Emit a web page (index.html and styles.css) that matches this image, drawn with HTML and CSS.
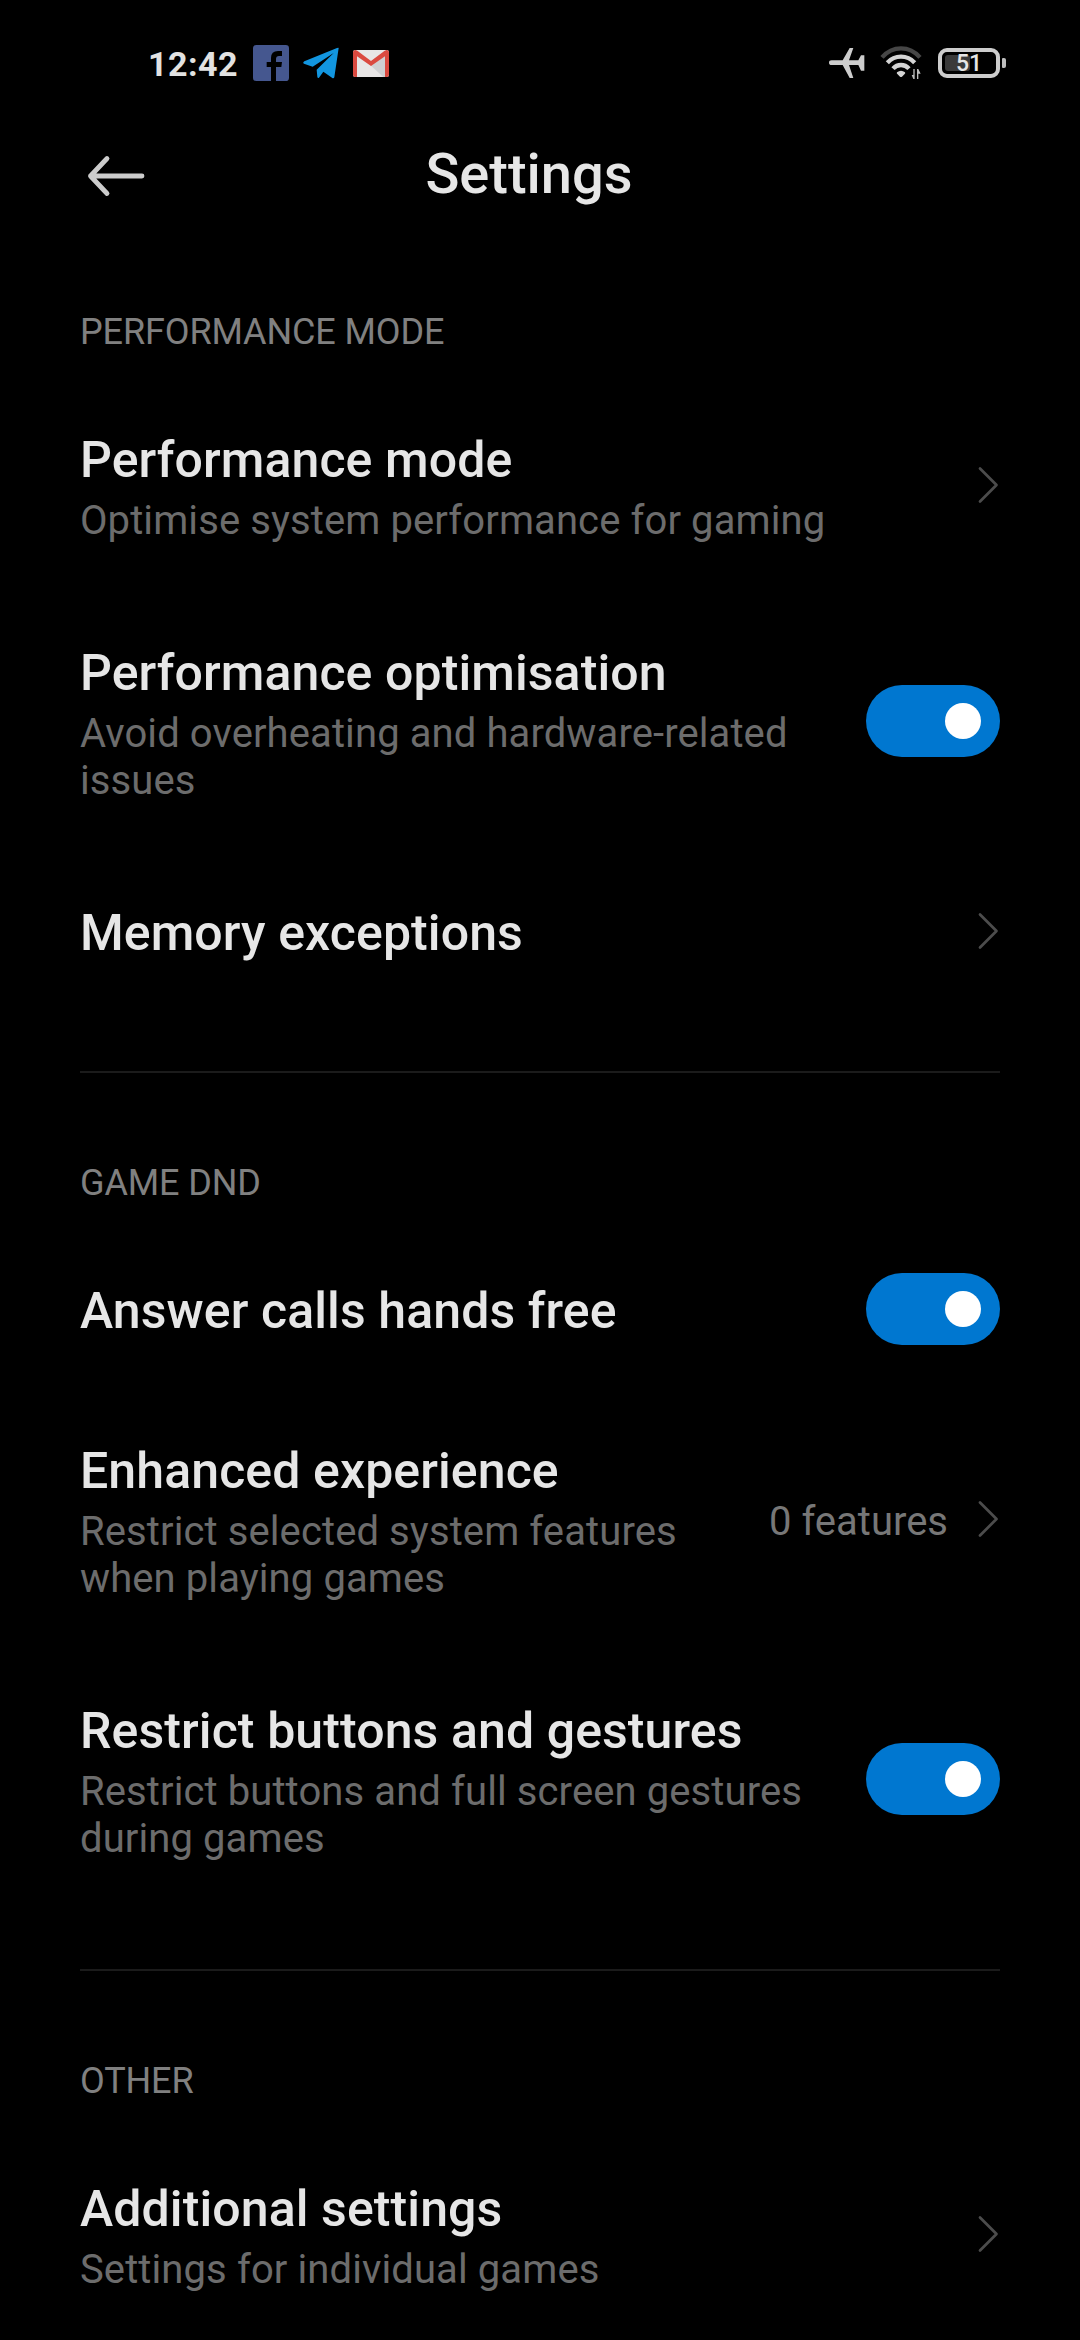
FILE: index.html
```html
<!DOCTYPE html>
<html lang="en">
<head>
<meta charset="utf-8">
<title>Settings</title>
<link rel="stylesheet" href="styles.css">
</head>
<body>
<svg class="defs" width="0" height="0" aria-hidden="true">
  <symbol id="chevron" viewBox="0 0 22 40"><path d="M2 3.500 18.500 20 2 36.500" fill="none" stroke="#4c4c4c" stroke-width="2.700" stroke-linecap="round" stroke-linejoin="round"/></symbol>
</svg>
<div class="status">
  <div class="status-left">
    <span class="clock">12:42</span>
    <svg width="36" height="36" viewBox="0 0 108 108"><path fill="#45578f" d="M10 0H98Q108 0 108 10V98Q108 108 98 108H69V66H85L87 51H69V42Q69 33 78 33H87V18H75Q54 18 54 39V51H41V66H54V108H10Q0 108 0 98V10Q0 0 10 0Z"/></svg>
    <svg width="36" height="36" viewBox="0 0 108 108"><path fill="#1296e0" d="M107 9 94 97Q92 101 88 99L61 80 48 98Q44 101 43 95L41 74 92 24 29 65 3 56Q-2 53 4 49L102 9Q107 7 107 9Z"/></svg>
    <svg width="36" height="27" viewBox="0 0 108 81"><rect width="108" height="81" rx="7" fill="#e8e6e6"/><path fill="#cfd0d2" d="M54 47 97 12V81H91Z"/><path fill="#db4a40" d="M0 8Q0 0 8 0L14 3 54 33 94 3 100 0Q108 0 108 8V74Q108 81 101 81H96V19L54 48 12 19V81H7Q0 81 0 74Z"/></svg>
  </div>
  <div class="status-right">
    <svg width="36" height="30" viewBox="0 0 108 90"><path fill="#cdcdcd" d="M8 37H41L62 0H73L60 37H88L96 22H106V68H96L88 51H60L73 90H62L41 51H8Q0 51 0 44 0 37 8 37Z"/></svg>
    <svg width="43" height="34" viewBox="0 0 129 102"><g fill="none" stroke-width="13"><path stroke="#464646" d="M6 34Q30 7 63 7T120 34"/><path stroke="#d4d4d4" d="M22 50Q39 32 63 32T104 50"/><path stroke="#d4d4d4" d="M39 68Q49 57 63 57T87 68"/></g><path fill="#d4d4d4" d="M51 79Q63 69 75 79 77 82 74 84L66 92Q63 94 60 92L52 84Q49 82 51 79Z"/><path fill="#bcbcbc" d="M104 69V99H100L95 87H100V69ZM111 99V69H115L122 83H115V99Z"/></svg>
    <div class="battery"><div class="battery-level"></div><span class="battery-text">51</span></div>
    <div class="battery-tip"></div>
  </div>
</div>
<header class="header">
  <svg class="back" width="60" height="44" viewBox="0 0 60 44"><path d="M56 22H4.500M21 4.500 4.500 22 21 39.500" fill="none" stroke="#cccccc" stroke-width="4.800" stroke-linecap="round" stroke-linejoin="round"/></svg>
  <h1 class="heading">Settings</h1>
</header>
<main>
  <section class="group">
    <h2 class="caption">PERFORMANCE MODE</h2>
    <div class="row double first">
      <div class="copy"><div class="title">Performance mode</div><div class="summary">Optimise system performance for gaming</div></div>
      <svg class="chevron"><use href="#chevron"/></svg>
    </div>
    <div class="row triple">
      <div class="copy"><div class="title">Performance optimisation</div><div class="summary">Avoid overheating and hardware-related<br>issues</div></div>
      <div class="switch"><div class="knob"></div></div>
    </div>
    <div class="row single">
      <div class="copy"><div class="title">Memory exceptions</div></div>
      <svg class="chevron"><use href="#chevron"/></svg>
    </div>
  </section>
  <section class="group">
    <h2 class="caption">GAME DND</h2>
    <div class="row single">
      <div class="copy"><div class="title">Answer calls hands free</div></div>
      <div class="switch"><div class="knob"></div></div>
    </div>
    <div class="row triple">
      <div class="copy"><div class="title">Enhanced experience</div><div class="summary">Restrict selected system features<br>when playing games</div></div>
      <span class="value">0 features</span>
      <svg class="chevron"><use href="#chevron"/></svg>
    </div>
    <div class="row triple">
      <div class="copy"><div class="title">Restrict buttons and gestures</div><div class="summary">Restrict buttons and full screen gestures<br>during games</div></div>
      <div class="switch"><div class="knob"></div></div>
    </div>
  </section>
  <section class="group">
    <h2 class="caption">OTHER</h2>
    <div class="row double">
      <div class="copy"><div class="title">Additional settings</div><div class="summary">Settings for individual games</div></div>
      <svg class="chevron"><use href="#chevron"/></svg>
    </div>
  </section>
</main>
</body>
</html>
```
FILE: styles.css
```css
* { box-sizing: border-box; }
html { background: #000; }
body {
  margin: 0;
  width: 1080px;
  height: 2340px;
  overflow: hidden;
  background: #000;
  color: #e6e6e6;
  font-family: Roboto, sans-serif;
}
svg { display: block; flex: none; }
.defs { position: absolute; }
h1, h2 { margin: 0; }

.status {
  display: flex;
  justify-content: space-between;
  height: 126px;
  padding: 0 74px 0 148px;
}
.status-left, .status-right {
  display: flex;
  align-items: center;
  height: 126px;
}
.status-left { gap: 14px; }
.status-right { gap: 15px; }
.clock {
  width: 91px;
  padding-top: 1px;
  font-size: 34px;
  font-weight: 700;
  line-height: 40px;
  letter-spacing: 0.5px;
  color: #e2e2e2;
}
.battery {
  display: flex;
  align-items: center;
  justify-content: center;
  position: relative;
  width: 62px;
  height: 30px;
  border: 4px solid #cdcdcd;
  border-radius: 9px;
}
.battery-level {
  position: absolute;
  left: 3px;
  top: 3px;
  width: 25px;
  height: 16px;
  border-radius: 3px;
  background: #3a3a3a;
}
.battery-text {
  position: relative;
  padding-top: 2px;
  font-size: 23px;
  font-weight: 500;
  line-height: 24px;
}
.battery-tip {
  width: 4px;
  height: 10px;
  margin-left: -13px;
  border-radius: 1px 2px 2px 1px;
  background: #bdbdbd;
}

.header {
  display: grid;
  grid-template-columns: 60px 1fr 60px;
  align-items: start;
  height: 96px;
  padding: 15px 86px 0;
}
.back { margin-top: 13px; }
.heading {
  font-size: 56px;
  font-weight: 500;
  line-height: 66px;
  text-align: center;
  padding-right: 22px;
}

.group { padding: 0 80px; }
.group + .group::before {
  content: "";
  display: block;
  height: 2px;
  margin-top: 60px;
  background: #1b1b1b;
}
.caption {
  height: 156px;
  padding-top: 89px;
  font-size: 36px;
  font-weight: 400;
  line-height: 42px;
  letter-spacing: -0.12px;
  color: #808080;
}
.row { display: flex; align-items: center; }
.single { height: 160px; }
.double { height: 214px; }
.first { height: 213px; }
.triple { height: 260px; }
.copy { flex: 1; padding: 6px 0 1px; white-space: nowrap; }
.single .copy { padding: 4px 0 0; }
.title { font-size: 50px; font-weight: 500; line-height: 59px; letter-spacing: 0.1px; }
.summary { margin-top: 7px; font-size: 40px; line-height: 47px; letter-spacing: 0.1px; color: #6c6c6c; }
.value { margin-right: 30px; padding-top: 4px; font-size: 40px; line-height: 47px; color: #777; }
.chevron { width: 22px; height: 40px; }
.switch {
  display: flex;
  align-items: center;
  justify-content: flex-end;
  width: 134px;
  height: 72px;
  padding-right: 19px;
  border-radius: 36px;
  background: #0077d0;
}
.knob { width: 36px; height: 36px; border-radius: 50%; background: #fff; }
```
